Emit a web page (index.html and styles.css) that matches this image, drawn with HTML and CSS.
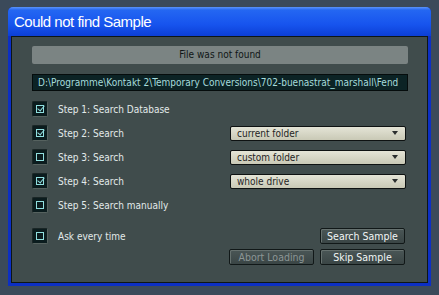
FILE: index.html
```html
<!DOCTYPE html>
<html lang="en">

<head>
    <meta charset="UTF-8">
    <title>Could not find Sample</title>
    <link rel="stylesheet" href="styles.css">
</head>

<body>
    <div class="window">
        <div class="title-bar">Could not find Sample</div>

        <div class="panel">
            <div class="status">File was not found</div>
            <div class="path">D:\Programme\Kontakt 2\Temporary Conversions\702-buenastrat_marshall\Fend</div>

            <div class="row first">
                <span class="check on"></span>
                <span class="label">Step 1: Search Database</span>
            </div>
            <div class="row">
                <span class="check on"></span>
                <span class="label">Step 2: Search</span>
                <div class="select">current folder</div>
            </div>
            <div class="row">
                <span class="check"></span>
                <span class="label">Step 3: Search</span>
                <div class="select">custom folder</div>
            </div>
            <div class="row">
                <span class="check on"></span>
                <span class="label">Step 4: Search</span>
                <div class="select">whole drive</div>
            </div>
            <div class="row">
                <span class="check"></span>
                <span class="label">Step 5: Search manually</span>
            </div>

            <div class="row ask">
                <span class="check"></span>
                <span class="label">Ask every time</span>
                <button class="btn">Search Sample</button>
            </div>
            <div class="actions">
                <button class="btn" disabled>Abort Loading</button>
                <button class="btn">Skip Sample</button>
            </div>
        </div>
    </div>
</body>

</html>
```

FILE: styles.css
```css
body {
    margin: 0;
    background-color: #3b4a5a;
    font-family: "DejaVu Sans Condensed", "Liberation Sans", sans-serif;
    font-size: 10px;
}

.window {
    width: 423px;
    height: 279px;
    margin: 7px 0 0 8px;
    background: #0c2fc4;
    border-radius: 5px 5px 0 0;
    box-sizing: border-box;
    padding: 0 3px 3px;
    display: flex;
    flex-direction: column;
}

.title-bar {
    height: 29px;
    margin: 0 -3px;
    padding-left: 6px;
    border-radius: 5px 5px 0 0;
    background: linear-gradient(#5c94f8 0, #2467f2 3px, #1754ee 60%, #0c3fd6 100%);
    color: #fff;
    font-family: "Liberation Sans", sans-serif;
    font-size: 15px;
    letter-spacing: -0.5px;
    line-height: 30px;
}

.panel {
    flex: 1;
    background: #404c4c;
    border: 1px solid #0d1616;
    padding: 9px 19px 0 20px;
}

.status {
    height: 18px;
    background: #7b8483;
    border-radius: 2px;
    color: #101616;
    text-align: center;
    line-height: 18px;
}

.path {
    height: 15px;
    margin-top: 10px;
    padding: 0 5px;
    background: #0c2325;
    border: 1px solid #050c0c;
    color: #a6dcdc;
    line-height: 15px;
    white-space: nowrap;
    overflow: hidden;
}

.row {
    height: 24px;
    display: flex;
    align-items: center;
}

.row.first {
    margin-top: 6px;
}

.ask {
    margin-top: 7px;
}

.check {
    width: 16px;
    height: 16px;
    box-sizing: border-box;
    background: #0b1c1e;
    border: 1px solid #1a2626;
    border-right-color: #56625f;
    border-bottom-color: #56625f;
    border-radius: 2px;
    position: relative;
}

.check::before {
    content: "";
    position: absolute;
    left: 3px;
    top: 3px;
    width: 6px;
    height: 6px;
    border: 1px solid #90e0e0;
}

.check.on::after {
    content: "";
    position: absolute;
    left: 6px;
    top: 2px;
    width: 3px;
    height: 6px;
    border: solid #90e0e0;
    border-width: 0 1px 1px 0;
    transform: rotate(40deg);
}

.label {
    margin-left: 10px;
    color: #e2eaea;
}

.select {
    margin-left: auto;
    margin-right: 2px;
    width: 176px;
    height: 15px;
    box-sizing: border-box;
    padding-left: 6px;
    background: linear-gradient(#e4e4d6, #c9c9b6);
    border: 1px solid #0e1212;
    border-radius: 2px;
    color: #1f2424;
    line-height: 13px;
    position: relative;
}

.select::after {
    content: "";
    position: absolute;
    right: 7px;
    top: 4px;
    border: 3px solid transparent;
    border-top: 4px solid #2a2e2e;
}

.btn {
    width: 85px;
    height: 16px;
    padding: 0;
    background: linear-gradient(#4a5656, #3a4545);
    border: 1px solid #111818;
    border-radius: 2px;
    box-shadow: inset 1px 1px 0 #66716f;
    color: #f2f6f6;
    font-family: inherit;
    font-size: 10.5px;
}

.btn:disabled {
    color: #8c9696;
}

.row .btn {
    margin-left: auto;
    margin-right: 3px;
}

.actions {
    display: flex;
    justify-content: flex-end;
    gap: 6px;
    margin-right: 3px;
    margin-top: 1px;
}
```
